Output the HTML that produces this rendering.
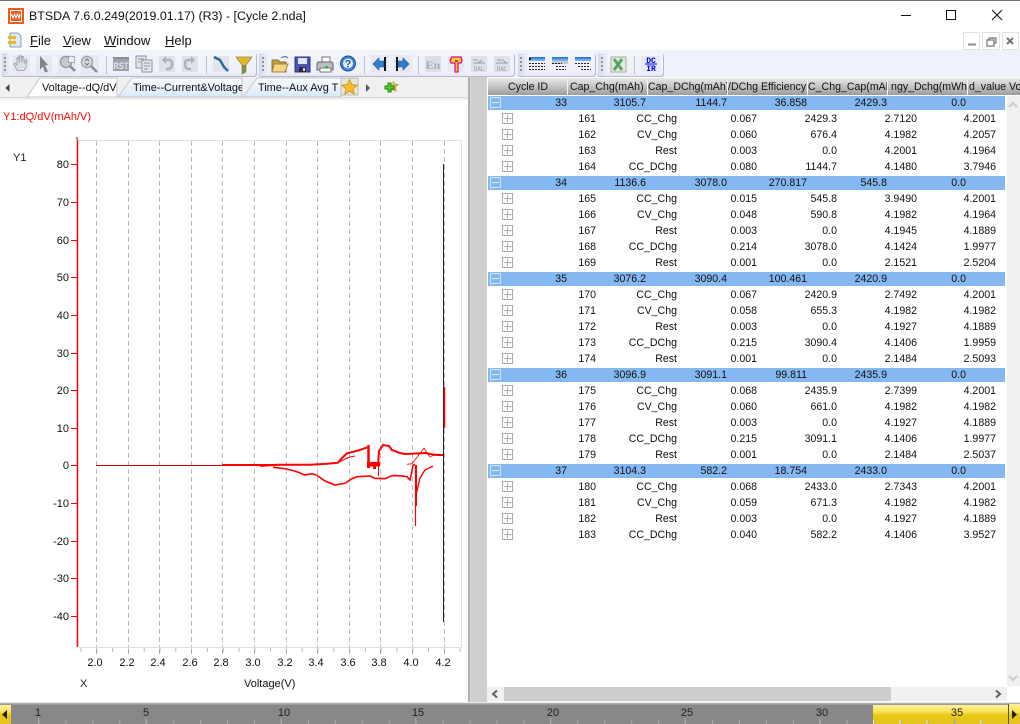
<!DOCTYPE html>
<html><head><meta charset="utf-8"><title>BTSDA</title>
<style>
html,body{margin:0;padding:0;width:1020px;height:724px;overflow:hidden;background:#fff;font-family:"Liberation Sans",sans-serif;color:#111}
div,span{position:absolute;white-space:nowrap}
.a{left:0;top:0}
.m{top:33px;font-size:13px;line-height:16px;color:#111}
.m u{text-decoration:underline}
.t{top:81px;font-size:10.9px;line-height:14px;color:#111;overflow:hidden}
.h{top:79px;height:16px;line-height:16px;font-size:10.6px;overflow:hidden;color:#111}
.hd{top:79px;width:1px;height:16px;background:#f4f4f4}
.b{left:488px;width:517px;height:14px;background:#85b7f1}
.r{left:0;width:1005px;height:16px;font-size:10.6px;line-height:16px;color:#111}
.r span{top:1px;text-align:right}
.g1{left:520px;width:47px}.g2{left:590px;width:56px}.g3{left:670px;width:57px}.g4{left:750px;width:57px}.g5{left:830px;width:57px}.g6{left:910px;width:56px}
.c1{left:551px;width:45px}.c2{left:620px;width:57px}.c3{left:700px;width:57px}.c4{left:780px;width:57px}.c5{left:860px;width:57px}.c6{left:940px;width:56px}
.p{left:502px;top:3px;width:9px;height:9px;border:1px solid #aaa;background:linear-gradient(#aaa,#aaa) center/7px 1px no-repeat,linear-gradient(#aaa,#aaa) center/1px 7px no-repeat,#fff}
.n{left:490px;top:3px;width:9px;height:9px;border:1px solid #cfe2fa;background:linear-gradient(#d8e8fb,#d8e8fb) center/7px 1px no-repeat}
.yl{left:0;width:69px;text-align:right;font-size:11px;line-height:14px;color:#111}
.xl{top:656px;width:30px;text-align:center;font-size:11px;line-height:14px;color:#111}
.tl{top:706px;width:30px;text-align:center;font-size:11px;line-height:14px;color:#222}
</style></head><body>

<div style="left:0;top:0;width:1020px;height:1px;background:#707070"></div>
<svg class="a" style="position:absolute" width="1020" height="724" viewBox="0 0 1020 724">
  <!-- app icon -->
  <rect x="8" y="8" width="16" height="16" fill="#f05a22"/>
  <rect x="10.5" y="10.5" width="11" height="11" fill="none" stroke="#fff" stroke-width="1"/>
  <path d="M11.5 14l1.5 4 1.5-4 1.5 4 1.500-4 1.500 4 1-4" fill="none" stroke="#fff" stroke-width="1"/>
  <!-- window controls -->
  <path d="M901 15.5h10" stroke="#111" stroke-width="1"/>
  <rect x="946.5" y="10.5" width="9" height="9" fill="none" stroke="#111"/>
  <path d="M992 10l10 10M1002 10l-10 10" stroke="#111" fill="none"/>
  <!-- menu icon -->
  <path d="M10 33h8l3 3v11H10z" fill="#dfe8f5" stroke="#8aa0c0"/>
  <rect x="8" y="36" width="8" height="3" fill="#f0b820"/><rect x="8" y="41" width="8" height="3" fill="#f0b820"/>
  <!-- mdi buttons -->
  <g fill="#fff" stroke="#e2e2e2"><rect x="963.5" y="32.5" width="16" height="17"/><rect x="982.5" y="32.5" width="17" height="17"/><rect x="1002.5" y="32.5" width="16" height="17"/></g>
  <path d="M968 44.5h8" stroke="#8a8f99" stroke-width="2"/>
  <path d="M987 40h7v6h-7zM989 40v-2h7v5h-2" fill="none" stroke="#6f7682" stroke-width="1.2"/>
  <path d="M1007 38l6 6M1013 38l-6 6" stroke="#6f7682" stroke-width="2"/>

  <!-- toolbar strip -->
  <rect x="0" y="50" width="1020" height="27" fill="#eff1fb"/>
  <defs><linearGradient id="tb" x1="0" y1="0" x2="0" y2="1"><stop offset="0" stop-color="#f3f4fb"/><stop offset=".85" stop-color="#eff0f8"/><stop offset="1" stop-color="#e6e7f0"/></linearGradient>
  <linearGradient id="gr" x1="0" y1="0" x2="1" y2="0"><stop offset="0" stop-color="#d6d9e8"/><stop offset="1" stop-color="#eceef7"/></linearGradient>
  <linearGradient id="tb2" x1="0" y1="0" x2="0" y2="1"><stop offset="0" stop-color="#fbfdff"/><stop offset="1" stop-color="#d7e8fa"/></linearGradient>
  <linearGradient id="blu" x1="0" y1="0" x2="0" y2="1"><stop offset="0" stop-color="#1a6fd0"/><stop offset="1" stop-color="#8fc0f0"/></linearGradient>
  <linearGradient id="yel" x1="0" y1="0" x2="0" y2="1"><stop offset="0" stop-color="#fff09a"/><stop offset=".35" stop-color="#f9e35a"/><stop offset=".55" stop-color="#e8c814"/><stop offset="1" stop-color="#e6c420"/></linearGradient></defs>
  <g fill="#b8bbce">
    <rect x="1" y="53" width="256" height="24" rx="3"/>
    <rect x="258" y="53" width="257" height="24" rx="3"/>
    <rect x="517" y="53" width="79" height="24" rx="3"/>
    <rect x="597" y="53" width="67" height="24" rx="3"/>
  </g>
  <g fill="url(#tb)">
    <rect x="1" y="52" width="255" height="24" rx="3"/>
    <rect x="258" y="52" width="256" height="24" rx="3"/>
    <rect x="517" y="52" width="78" height="24" rx="3"/>
    <rect x="597" y="52" width="66" height="24" rx="3"/>
  </g>
  <g fill="url(#gr)"><rect x="2" y="53" width="8" height="23"/><rect x="259" y="53" width="9" height="23"/><rect x="518" y="53" width="9" height="23"/><rect x="598" y="53" width="9" height="23"/></g>
  <g fill="#8f94a4">
    <path d="M4 57h2v2H4zM4 61h2v2H4zM4 65h2v2H4zM4 69h2v2H4z"/>
    <path d="M262 57h2v2h-2zM262 61h2v2h-2zM262 65h2v2h-2zM262 69h2v2h-2z"/>
    <path d="M520 57h2v2h-2zM520 61h2v2h-2zM520 65h2v2h-2zM520 69h2v2h-2z"/>
    <path d="M601 57h2v2h-2zM601 61h2v2h-2zM601 65h2v2h-2zM601 69h2v2h-2z"/>
  </g>
  <!-- separators -->
  <g stroke="#c0c2cc"><path d="M106.5 56v18M206.5 56v18M364.5 56v18M418.5 56v18M634.5 56v18"/></g>
  <!-- hand -->
  <rect x="12" y="55" width="18" height="19" fill="#e6e8f2"/>
  <path d="M17 70l-3-6 1-1 2 2v-7l1.500-1 1 6v-7l1.500-.5 1 7v-6l1.500 0 1 7 1.500-4 1 1-1 7-2 3h-6z" fill="#dde0e8" stroke="#a5a8b0"/>
  <!-- arrow -->
  <rect x="36" y="55" width="16" height="19" fill="#e6e8f2"/>
  <path d="M40 56l8 9-3 .5 3 6-3 1-2-6-3 3z" fill="#7f838c"/>
  <!-- zoom box -->
  <rect x="58" y="55" width="18" height="19" fill="#e6e8f2"/>
  <circle cx="66" cy="62" r="5.500" fill="#c7cad2" stroke="#999ca6" stroke-width="1.500"/><path d="M70 66l5 5" stroke="#8a8d96" stroke-width="2.500"/>
  <rect x="68.500" y="56.500" width="6" height="6" fill="#eef0f6" stroke="#8e919a" stroke-dasharray="2 1"/>
  <!-- zoom -->
  <rect x="81" y="55" width="18" height="19" fill="#e6e8f2"/>
  <circle cx="87" cy="62" r="5.500" fill="#d5d8de" stroke="#a5a8b1" stroke-width="1.500"/><path d="M91 66l6 6" stroke="#8a8d96" stroke-width="2.500"/><path d="M85 61l2-2 2 2M85 63l2 2 2-2" stroke="#777" fill="none"/>
  <!-- RST -->
  <rect x="113" y="57" width="16" height="14" fill="#9fa2aa"/><rect x="113" y="57" width="16" height="2" fill="#8b8e96"/>
  <text x="121" y="69" font-size="9.500" text-anchor="middle" fill="#e6e7ec" font-family="Liberation Sans" font-weight="bold" textLength="15" lengthAdjust="spacingAndGlyphs">RST</text>
  <!-- chip -->
  <rect x="136" y="56" width="10" height="12" fill="#e4e6ef" stroke="#90939d"/><rect x="142" y="60" width="10" height="12" fill="#e4e6ef" stroke="#90939d"/>
  <path d="M138 59h6M138 62h3M144 63h6M144 66h6M144 69h4" stroke="#90939d"/>
  <!-- undo/redo -->
  <rect x="159" y="56" width="16" height="16" fill="#dfe1ea"/><path d="M163 60h6a3 3 0 0 1 3 3v2a4 4 0 0 1-4 4h-2" fill="none" stroke="#aeb1ba" stroke-width="2.500"/><path d="M166 56v8l-4-4z" fill="#aeb1ba"/>
  <rect x="182" y="56" width="16" height="16" fill="#dfe1ea"/><path d="M194 60h-6a3 3 0 0 0-3 3v2a4 4 0 0 0 4 4h2" fill="none" stroke="#aeb1ba" stroke-width="2.500"/><path d="M191 56v8l4-4z" fill="#aeb1ba"/>
  <!-- curve -->
  <rect x="213" y="56" width="16" height="16" fill="#e3e5ee"/><path d="M214 57l6 3 4 7 4 4" fill="none" stroke="#2e6aa0" stroke-width="2.500"/>
  <!-- filter -->
  <path d="M236 57h16l-6 8v7l-4 2v-9z" fill="#e0b830" stroke="#a08a30" stroke-width=".8"/><path d="M242 65h4v7l-4 2z" fill="#7f8c50"/>
  <!-- open -->
  <path d="M272 60h6l2 2h6v10h-14z" fill="#c9a040" stroke="#8a7030"/><path d="M274 64h14l-3 8h-13z" fill="#f5d683" stroke="#a08438"/><path d="M281 58q4-3 7 0" stroke="#3d6e9e" fill="none"/>
  <!-- save -->
  <rect x="295" y="57" width="15" height="15" fill="#4a55b0" stroke="#30357a"/><rect x="298" y="58" width="9" height="6" fill="#dfe3f5"/><rect x="299" y="67" width="7" height="5" fill="#2a2a3a"/><rect x="303" y="68" width="2" height="3" fill="#ddd"/>
  <!-- print -->
  <path d="M322 57h8v5h-8z" fill="#fff" stroke="#777"/><path d="M318 62h14l1 2v6h-16v-6z" fill="#b9bdc5" stroke="#666"/><rect x="320" y="68" width="11" height="4" fill="#fff" stroke="#777"/><rect x="325" y="66" width="3" height="2.500" fill="#22bb33"/>
  <!-- help -->
  <circle cx="348" cy="63.500" r="7.500" fill="#3f7fd6" stroke="#1c4f9f"/><circle cx="348" cy="63.500" r="5" fill="#e7f0fb"/>
  <text x="348" y="67.500" font-size="11" font-weight="bold" text-anchor="middle" fill="#1f55ad" font-family="Liberation Sans">?</text>
  <!-- nav -->
  <rect x="371" y="55" width="18" height="18" fill="#e6e8f2"/><rect x="384" y="57" width="2" height="14" fill="#111"/><path d="M373 64l6-6v3h5v6h-5v3z" fill="#2f7ed0" stroke="#1c4f9f" stroke-width=".6"/>
  <rect x="394" y="55" width="18" height="18" fill="#e6e8f2"/><rect x="396" y="57" width="2" height="14" fill="#111"/><path d="M409 64l-6-6v3h-5v6h5v3z" fill="#2f7ed0" stroke="#1c4f9f" stroke-width=".6"/>
  <!-- En -->
  <rect x="425" y="56" width="16" height="16" fill="#dcdee8"/><text x="433" y="69" font-size="12" font-weight="bold" text-anchor="middle" fill="#a8abb5" font-family="Liberation Serif">En</text>
  <!-- pin -->
  <rect x="448" y="56" width="16" height="16" fill="#e6e8f2"/><path d="M452 57h9l1 3-1 3h-3v9h-3v-9h-4l-1-3z" fill="#f2d030" stroke="#e0108a" stroke-width="1.300"/><path d="M455 60h3v2h-3z" fill="#d03030"/>
  <!-- DAL -->
  <rect x="471" y="56" width="16" height="16" fill="#dfe1ea"/><path d="M473 63h12M478 63l4-3M473 60h5" stroke="#9a9da6"/>
  <text x="479" y="71" font-size="6" text-anchor="middle" fill="#9a9da6" font-family="Liberation Mono">DAL</text>
  <rect x="494" y="56" width="16" height="16" fill="#dfe1ea"/><path d="M496 63h12M497 60h6l3 3" stroke="#9a9da6" fill="none"/>
  <text x="502" y="71" font-size="6" text-anchor="middle" fill="#9a9da6" font-family="Liberation Mono">DAL</text>
  <!-- grids -->
  <g>
    <rect x="529" y="57" width="16" height="4" fill="url(#blu)"/><path d="M529 63.500h16M529 66.500h16M529 69.500h16" stroke="#222" stroke-dasharray="2 1"/><path d="M529 58h2v2h-2z" fill="#111"/>
    <rect x="552" y="57" width="16" height="4" fill="url(#blu)"/><rect x="552" y="61" width="16" height="3" fill="#c8c8c8"/><path d="M552 63.500h10M556 66.500h10M556 69.500h10" stroke="#222" stroke-dasharray="2 1"/>
    <rect x="575" y="57" width="16" height="4" fill="url(#blu)"/><path d="M575 63.500h14M578 66.500h12M581 69.500h10" stroke="#222" stroke-dasharray="2 1"/>
  </g>
  <!-- excel -->
  <rect x="611" y="57" width="15" height="15" fill="#e4e9e0" stroke="#9fb09f"/><path d="M614 59l8 11M622 59l-8 11" stroke="#5aa564" stroke-width="3"/>
  <!-- DC IR -->
  <rect x="641" y="56" width="19" height="16" fill="#e6e8f2"/>
  <text x="651" y="63" font-size="8" font-weight="bold" text-anchor="middle" fill="#0000f0" font-family="Liberation Mono">DC</text>
  <path d="M645 64h12" stroke="#0000f0"/>
  <text x="651" y="71" font-size="8" font-weight="bold" text-anchor="middle" fill="#0000f0" font-family="Liberation Mono">IR</text>

  <!-- tab strip -->
  <rect x="0" y="77" width="468" height="23" fill="#f0f0f0"/>
  <path d="M5.500 88l4-4v8z" fill="#444"/>
  <path d="M243 97l14-19h84v19z" fill="url(#tb2)" stroke="#c5c8d0"/>
  <path d="M118 97l14-19h110v19z" fill="url(#tb2)" stroke="#c5c8d0"/>
  <path d="M27 97l13-19h77v19z" fill="#fff" stroke="#c5c8d0"/>
  <path d="M0 97.500h27M117 97.500h351" stroke="#d6d6d6"/>
  <!-- star -->
  <rect x="341" y="78" width="17" height="17" fill="#e9e5d8" stroke="#bbb"/>
  <path d="M349.500 79.500l2.300 5 5.400.6-4 3.700 1.100 5.300-4.800-2.700-4.800 2.700 1.100-5.300-4-3.700 5.400-.6z" fill="#f8bd2c" stroke="#c08a20" stroke-width=".7"/>
  <path d="M366 84l4 4-4 4z" fill="#555"/>
  <path d="M393 81l1.500 3 3.500.5-2.500 2.500.6 4-3-1.500-3 1.500" fill="#f2c037" stroke="#b08c20" stroke-width=".7"/>
  <path d="M388 83v3h-3v3h3v3h3v-3h3v-3h-3v-3z" fill="#56c828" stroke="#1f8a10"/>

  <!-- splitter -->
  <rect x="468" y="77" width="2.500" height="625" fill="#b0b0b0"/>
  <rect x="471" y="77" width="16" height="625" fill="#cfcfcf"/>

  <!-- chart frame -->
  <path d="M78 140.500h384M461.500 140v508M78 647.500h384" stroke="#e2e2e2" fill="none"/>
  <rect x="76" y="137" width="2" height="3" fill="#999"/>
  <path d="M96.500 141V647M128.500 141V647M159.500 141V647M191.500 141V647M222.500 141V647M254.500 141V647M286.500 141V647M317.500 141V647M349.500 141V647M380.500 141V647M412.500 141V647M444.500 141V647" stroke="#bdbdbd" stroke-dasharray="5 3" fill="none"/>
  <path d="M77.500 140V647" stroke="#f00" stroke-width="1.500"/>
  <path d="M71 164.500h6M71 202.500h6M71 240.500h6M71 277.500h6M71 315.500h6M71 353.500h6M71 390.500h6M71 428.500h6M71 465.500h6M71 503.500h6M71 541.500h6M71 578.500h6M71 616.500h6" stroke="#f00"/>
  <path d="M80 650h381" stroke="#bbb" stroke-width="4" stroke-dasharray="1 14.800" stroke-dashoffset="-.5"/>
  <path d="M96.500 649v5M128.500 649v5M159.500 649v5M191.500 649v5M222.500 649v5M254.500 649v5M286.500 649v5M317.500 649v5M349.500 649v5M380.500 649v5M412.500 649v5M444.500 649v5" stroke="#aaa"/>

  <!-- curves -->
  <g fill="none" stroke="#f00">
    <path d="M96 465.500H222" stroke-width="1" stroke="#c00000"/>
    <path d="M222 465H277" stroke-width="2"/>
    <path d="M260 466L277 464.800H310L327 463.700L338 462.700L342 458L347 453.300L355 451.300L360 450L367.300 447.300" stroke-width="2"/>
    <path d="M338 462.700L345 459L350 457L355 456" stroke-width="1"/>
    <path d="M368.500 445V466" stroke-width="2.500"/>
    <path d="M378 466L379 451L383 445L389 446L392 450L400 453L405 454L412 453.700L420 453.300L426 453L430 454L437 455H444" stroke-width="2"/>
    <path d="M273 467.300L287 469L297 471.700L305 475L312 473.700L317 475.300L325 481L335 485L345 483.300L352 478.700L357 476.700L370 476L375 478.300L385 478.700L392 475.700L400 475.700L407 476.700L410 480L411 480" stroke-width="1.600"/>
    <path d="M410 480L413 465.500L415 464" stroke-width="1.500"/>
    <path d="M415.500 465V526" stroke-width="1.200"/>
    <path d="M416 465V506" stroke-width="2"/>
    <path d="M416 495L420 478L425 470L431 467L433 466.300" stroke-width="1.400"/>
    <path d="M407 464.300L412 463.700L420 453.300L424 448L427 453.300L430 456.700L435 455" stroke-width=".8"/>
    <path d="M378.500 476V452" stroke-width="1"/>
  </g>
  <rect x="367" y="462" width="13" height="4.500" fill="#f00"/>
  <rect x="367" y="466" width="3" height="2" fill="#f00"/><rect x="373" y="466" width="3" height="3" fill="#f00"/>
  <path d="M443.500 164V622" stroke="#222" stroke-width="1"/>
  <path d="M444.500 387V428" stroke="#f00" stroke-width="1.500"/>

  <!-- vscroll -->
  <rect x="1007" y="96" width="13" height="590" fill="#f0f0f0"/>
  <path d="M1009 107l4-4 4 4" fill="none" stroke="#c9c9c9" stroke-width="2"/>
  <path d="M1009 676l4 4 4-4" fill="none" stroke="#c9c9c9" stroke-width="2"/>
  <!-- hscroll -->
  <rect x="487" y="687" width="520" height="14" fill="#f0f0f0"/>
  <rect x="504" y="687" width="387" height="14" fill="#cdcdcd"/>
  <path d="M497 690.500l-4 3.500 4 3.500" fill="none" stroke="#606060" stroke-width="2"/>
  <path d="M996 690.500l4 3.500-4 3.500" fill="none" stroke="#606060" stroke-width="2"/>

  <!-- timeline -->
  <rect x="0" y="702" width="1020" height="2" fill="#e8e8e8"/>
  <rect x="0" y="703" width="1020" height="1.500" fill="#b0b0b0"/>
  <rect x="0" y="704.500" width="1020" height="19.500" fill="#888"/>
  <rect x="873" y="705" width="135" height="19" fill="url(#yel)"/>
  <rect x="0" y="705" width="11" height="19" fill="url(#yel)"/>
  <rect x="1008" y="704" width="12" height="20" fill="url(#yel)"/><rect x="1008" y="704" width="1" height="20" fill="#555"/>
  <path d="M7 710v9l-5-4.500z" fill="#222"/>
  <path d="M1012 710v9l5-4.500z" fill="#222"/>
  <path d="M38.500 722H1008" stroke="#a8a8a8" stroke-width="4" stroke-dasharray="1 25.940"/>
  <path d="M38.500 718v6M146 718v6M281 718v6M415.700 718v6M550.500 718v6M685 718v6M819.500 718v6M954.300 718v6" stroke="#a8a8a8"/>
  <path d="M873.500 720v4M900 720v4M927 720v4M981 720v4" stroke="#fff3b0"/>
</svg>

<div style="left:29px;top:8px;font-size:12.4px;line-height:16px;color:#111">BTSDA 7.6.0.249(2019.01.17) (R3) - [Cycle 2.nda]</div>
<div class="m" style="left:30px"><u>F</u>ile</div>
<div class="m" style="left:63px"><u>V</u>iew</div>
<div class="m" style="left:104px"><u>W</u>indow</div>
<div class="m" style="left:165px"><u>H</u>elp</div>

<div class="t" style="left:42px;width:75px">Voltage--dQ/dV</div>
<div class="t" style="left:133px;width:109px">Time--Current&amp;Voltage</div>
<div class="t" style="left:258px;width:83px">Time--Aux Avg T</div>

<div style="left:3px;top:110px;font-size:11px;line-height:14px;color:#f00">Y1:dQ/dV(mAh/V)</div>
<div style="left:13px;top:151px;font-size:11px;line-height:14px;color:#222">Y1</div>
<div class="yl" style="top:158px">80</div><div class="yl" style="top:196px">70</div><div class="yl" style="top:234px">60</div><div class="yl" style="top:271px">50</div><div class="yl" style="top:309px">40</div><div class="yl" style="top:347px">30</div><div class="yl" style="top:384px">20</div><div class="yl" style="top:422px">10</div><div class="yl" style="top:459px">0</div><div class="yl" style="top:497px">-10</div><div class="yl" style="top:535px">-20</div><div class="yl" style="top:572px">-30</div><div class="yl" style="top:610px">-40</div>

<div class="xl" style="left:80px">2.0</div><div class="xl" style="left:112px">2.2</div><div class="xl" style="left:143px">2.4</div><div class="xl" style="left:175px">2.6</div><div class="xl" style="left:206px">2.8</div><div class="xl" style="left:238px">3.0</div><div class="xl" style="left:270px">3.2</div><div class="xl" style="left:301px">3.4</div><div class="xl" style="left:333px">3.6</div><div class="xl" style="left:364px">3.8</div><div class="xl" style="left:396px">4.0</div><div class="xl" style="left:428px">4.2</div>
<div style="left:80px;top:677px;font-size:11px;line-height:14px;color:#222">X</div>
<div style="left:244px;top:677px;font-size:11px;line-height:14px;color:#111">Voltage(V)</div>

<div style="left:488px;top:78px;width:532px;height:17px;background:linear-gradient(#e8e8e8,#c8c8c8 45%,#9c9c9c)"></div>
<div class="h" style="left:508px">Cycle ID</div>
<div class="h" style="left:570px;width:77px">Cap_Chg(mAh)</div>
<div class="h" style="left:648px;width:79px">Cap_DChg(mAh)</div>
<div class="h" style="left:728px;width:79px">/DChg Efficiency</div>
<div class="h" style="left:808px;width:79px">C_Chg_Cap(mAh</div>
<div class="h" style="left:888px;width:79px;direction:rtl"><span style="position:static;direction:ltr;unicode-bidi:bidi-override">ngy_Dchg(mWh</span></div>
<div class="h" style="left:969px;width:51px">d_value Vol</div>
<div class="hd" style="left:567px"></div><div class="hd" style="left:647px"></div><div class="hd" style="left:727px"></div><div class="hd" style="left:807px"></div><div class="hd" style="left:887px"></div><div class="hd" style="left:967px"></div>

<div class="b" style="top:96px"></div><div class="b" style="top:176px"></div><div class="b" style="top:272px"></div><div class="b" style="top:368px"></div><div class="b" style="top:464px"></div>

<div class="r" style="top:94px"><i class="n" style="position:absolute"></i><span class="g1">33</span><span class="g2">3105.7</span><span class="g3">1144.7</span><span class="g4">36.858</span><span class="g5">2429.3</span><span class="g6">0.0</span></div>
<div class="r" style="top:110px"><i class="p" style="position:absolute"></i><span class="c1">161</span><span class="c2">CC_Chg</span><span class="c3">0.067</span><span class="c4">2429.3</span><span class="c5">2.7120</span><span class="c6">4.2001</span></div>
<div class="r" style="top:126px"><i class="p" style="position:absolute"></i><span class="c1">162</span><span class="c2">CV_Chg</span><span class="c3">0.060</span><span class="c4">676.4</span><span class="c5">4.1982</span><span class="c6">4.2057</span></div>
<div class="r" style="top:142px"><i class="p" style="position:absolute"></i><span class="c1">163</span><span class="c2">Rest</span><span class="c3">0.003</span><span class="c4">0.0</span><span class="c5">4.2001</span><span class="c6">4.1964</span></div>
<div class="r" style="top:158px"><i class="p" style="position:absolute"></i><span class="c1">164</span><span class="c2">CC_DChg</span><span class="c3">0.080</span><span class="c4">1144.7</span><span class="c5">4.1480</span><span class="c6">3.7946</span></div>

<div class="r" style="top:174px"><i class="n" style="position:absolute"></i><span class="g1">34</span><span class="g2">1136.6</span><span class="g3">3078.0</span><span class="g4">270.817</span><span class="g5">545.8</span><span class="g6">0.0</span></div>
<div class="r" style="top:190px"><i class="p" style="position:absolute"></i><span class="c1">165</span><span class="c2">CC_Chg</span><span class="c3">0.015</span><span class="c4">545.8</span><span class="c5">3.9490</span><span class="c6">4.2001</span></div>
<div class="r" style="top:206px"><i class="p" style="position:absolute"></i><span class="c1">166</span><span class="c2">CV_Chg</span><span class="c3">0.048</span><span class="c4">590.8</span><span class="c5">4.1982</span><span class="c6">4.1964</span></div>
<div class="r" style="top:222px"><i class="p" style="position:absolute"></i><span class="c1">167</span><span class="c2">Rest</span><span class="c3">0.003</span><span class="c4">0.0</span><span class="c5">4.1945</span><span class="c6">4.1889</span></div>
<div class="r" style="top:238px"><i class="p" style="position:absolute"></i><span class="c1">168</span><span class="c2">CC_DChg</span><span class="c3">0.214</span><span class="c4">3078.0</span><span class="c5">4.1424</span><span class="c6">1.9977</span></div>
<div class="r" style="top:254px"><i class="p" style="position:absolute"></i><span class="c1">169</span><span class="c2">Rest</span><span class="c3">0.001</span><span class="c4">0.0</span><span class="c5">2.1521</span><span class="c6">2.5204</span></div>

<div class="r" style="top:270px"><i class="n" style="position:absolute"></i><span class="g1">35</span><span class="g2">3076.2</span><span class="g3">3090.4</span><span class="g4">100.461</span><span class="g5">2420.9</span><span class="g6">0.0</span></div>
<div class="r" style="top:286px"><i class="p" style="position:absolute"></i><span class="c1">170</span><span class="c2">CC_Chg</span><span class="c3">0.067</span><span class="c4">2420.9</span><span class="c5">2.7492</span><span class="c6">4.2001</span></div>
<div class="r" style="top:302px"><i class="p" style="position:absolute"></i><span class="c1">171</span><span class="c2">CV_Chg</span><span class="c3">0.058</span><span class="c4">655.3</span><span class="c5">4.1982</span><span class="c6">4.1982</span></div>
<div class="r" style="top:318px"><i class="p" style="position:absolute"></i><span class="c1">172</span><span class="c2">Rest</span><span class="c3">0.003</span><span class="c4">0.0</span><span class="c5">4.1927</span><span class="c6">4.1889</span></div>
<div class="r" style="top:334px"><i class="p" style="position:absolute"></i><span class="c1">173</span><span class="c2">CC_DChg</span><span class="c3">0.215</span><span class="c4">3090.4</span><span class="c5">4.1406</span><span class="c6">1.9959</span></div>
<div class="r" style="top:350px"><i class="p" style="position:absolute"></i><span class="c1">174</span><span class="c2">Rest</span><span class="c3">0.001</span><span class="c4">0.0</span><span class="c5">2.1484</span><span class="c6">2.5093</span></div>

<div class="r" style="top:366px"><i class="n" style="position:absolute"></i><span class="g1">36</span><span class="g2">3096.9</span><span class="g3">3091.1</span><span class="g4">99.811</span><span class="g5">2435.9</span><span class="g6">0.0</span></div>
<div class="r" style="top:382px"><i class="p" style="position:absolute"></i><span class="c1">175</span><span class="c2">CC_Chg</span><span class="c3">0.068</span><span class="c4">2435.9</span><span class="c5">2.7399</span><span class="c6">4.2001</span></div>
<div class="r" style="top:398px"><i class="p" style="position:absolute"></i><span class="c1">176</span><span class="c2">CV_Chg</span><span class="c3">0.060</span><span class="c4">661.0</span><span class="c5">4.1982</span><span class="c6">4.1982</span></div>
<div class="r" style="top:414px"><i class="p" style="position:absolute"></i><span class="c1">177</span><span class="c2">Rest</span><span class="c3">0.003</span><span class="c4">0.0</span><span class="c5">4.1927</span><span class="c6">4.1889</span></div>
<div class="r" style="top:430px"><i class="p" style="position:absolute"></i><span class="c1">178</span><span class="c2">CC_DChg</span><span class="c3">0.215</span><span class="c4">3091.1</span><span class="c5">4.1406</span><span class="c6">1.9977</span></div>
<div class="r" style="top:446px"><i class="p" style="position:absolute"></i><span class="c1">179</span><span class="c2">Rest</span><span class="c3">0.001</span><span class="c4">0.0</span><span class="c5">2.1484</span><span class="c6">2.5037</span></div>

<div class="r" style="top:462px"><i class="n" style="position:absolute"></i><span class="g1">37</span><span class="g2">3104.3</span><span class="g3">582.2</span><span class="g4">18.754</span><span class="g5">2433.0</span><span class="g6">0.0</span></div>
<div class="r" style="top:478px"><i class="p" style="position:absolute"></i><span class="c1">180</span><span class="c2">CC_Chg</span><span class="c3">0.068</span><span class="c4">2433.0</span><span class="c5">2.7343</span><span class="c6">4.2001</span></div>
<div class="r" style="top:494px"><i class="p" style="position:absolute"></i><span class="c1">181</span><span class="c2">CV_Chg</span><span class="c3">0.059</span><span class="c4">671.3</span><span class="c5">4.1982</span><span class="c6">4.1982</span></div>
<div class="r" style="top:510px"><i class="p" style="position:absolute"></i><span class="c1">182</span><span class="c2">Rest</span><span class="c3">0.003</span><span class="c4">0.0</span><span class="c5">4.1927</span><span class="c6">4.1889</span></div>
<div class="r" style="top:526px"><i class="p" style="position:absolute"></i><span class="c1">183</span><span class="c2">CC_DChg</span><span class="c3">0.040</span><span class="c4">582.2</span><span class="c5">4.1406</span><span class="c6">3.9527</span></div>

<div class="tl" style="left:23px">1</div><div class="tl" style="left:131px">5</div><div class="tl" style="left:269px">10</div><div class="tl" style="left:403px">15</div><div class="tl" style="left:538px">20</div><div class="tl" style="left:672px">25</div><div class="tl" style="left:807px">30</div><div class="tl" style="left:942px">35</div>
</body></html>
